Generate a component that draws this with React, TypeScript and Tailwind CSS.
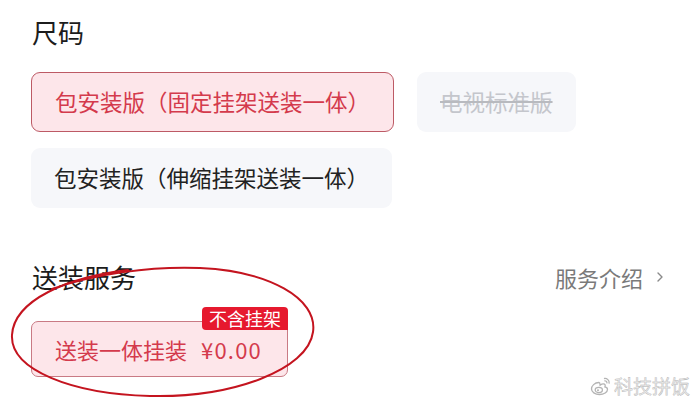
import React from 'react';

const font = { fontFamily: '"Noto Sans CJK SC", "Noto Sans", sans-serif' };

function WeiboLogo() {
  return (
    <svg width="22" height="20" viewBox="0 0 22 20" fill="none" stroke="#b4b4b4" strokeWidth="1.3">
      <path d="M9 6.5C4.5 6.5 1.5 10 1.5 13c0 3 3.5 5.5 8 5.5s8-2.5 8-5c0-1.8-1.6-2.4-2.6-2.6.6-1.5.4-3-1.6-3-1.2 0-2.6.8-3.2 1.2C10 7.6 10 6.5 9 6.5z" fill="#fff" />
      <ellipse cx="8.8" cy="14" rx="3.6" ry="2.6" />
      <circle cx="8" cy="14.2" r="1" fill="#b4b4b4" stroke="none" />
      <path d="M14.5 2.5c2.5-.3 5 1.8 4.6 4.6" strokeLinecap="round" />
      <path d="M14.8 4.8c1.2-.1 2.3.9 2.1 2.1" strokeLinecap="round" />
    </svg>
  );
}

export default function App() {
  return (
    <div className="relative w-[700px] h-[402px] bg-white overflow-hidden pl-[31px] pr-[35px] pt-[14px]" style={font}>
      {/* 尺码 */}
      <h2 className="text-[26px] leading-[36px] text-[#1c1c1c] pl-px">尺码</h2>
      <div className="mt-[22px] flex flex-wrap gap-x-[23px] gap-y-[16px] w-[580px]">
        <button className="h-[60px] px-[23px] rounded-[9px] border border-[#bd5a65] bg-[#fde6ea] text-[22.5px] text-[#d43a4c]">
          包安装版（固定挂架送装一体）
        </button>
        <button className="h-[60px] px-[23px] rounded-[9px] bg-[#f6f7fa] text-[22.5px] text-[#c4c6cc] line-through decoration-[#b8babf]">
          电视标准版
        </button>
        <button className="h-[60px] px-[23px] rounded-[9px] bg-[#f6f7fa] text-[22.5px] text-[#222]">
          包安装版（伸缩挂架送装一体）
        </button>
      </div>

      {/* 送装服务 */}
      <div className="mt-[51px] flex items-center justify-between">
        <h2 className="text-[26px] leading-[36px] text-[#1c1c1c] pl-px">送装服务</h2>
        <div className="flex items-center gap-[12px] text-[22px] leading-[36px] text-[#7a7a7a]">
          <span>服务介绍</span>
          <svg width="10" height="14" viewBox="0 0 10 14" fill="none" stroke="#8a8a8a" strokeWidth="1.4" strokeLinecap="round" strokeLinejoin="round">
            <path d="M3 3l4 4-4 4" />
          </svg>
        </div>
      </div>
      <div className="mt-[26px] flex">
        <div className="relative">
          <button className="h-[56px] pl-[23px] pr-[25px] rounded-[7px] border border-[#c97a84] bg-[#fde6ea] text-[22px] text-[#d43a4c] flex items-center gap-[14px]">
            <span>送装一体挂装</span>
            <span className="tracking-[1.2px]">¥0.00</span>
          </button>
          <span className="absolute -top-[14px] right-0 h-[23px] px-[7px] rounded-t-[4px] rounded-bl-[4px] bg-[#e6192e] text-white text-[18px] leading-[23px]">
            不含挂架
          </span>
        </div>
      </div>

      {/* hand-drawn annotation */}
      <svg className="absolute left-0 top-0 pointer-events-none" width="700" height="402" fill="none">
        <path
          d="M52 289C95 274 150 266 200 268C268 271 318 298 313 332C308 370 232 398 150 396C72 394 10 370 12 335C14 300 68 277 128 270"
          stroke="#c4141f"
          strokeWidth="2"
          strokeLinecap="round"
        />
      </svg>

      {/* watermark */}
      <div className="absolute right-[10px] bottom-[4px] flex items-center gap-[2px]">
        <WeiboLogo />
        <span className="text-[19px] leading-[24px] text-[#ececec] [-webkit-text-stroke:0.4px_#b0b0b0]">科技拼饭</span>
      </div>
    </div>
  );
}
